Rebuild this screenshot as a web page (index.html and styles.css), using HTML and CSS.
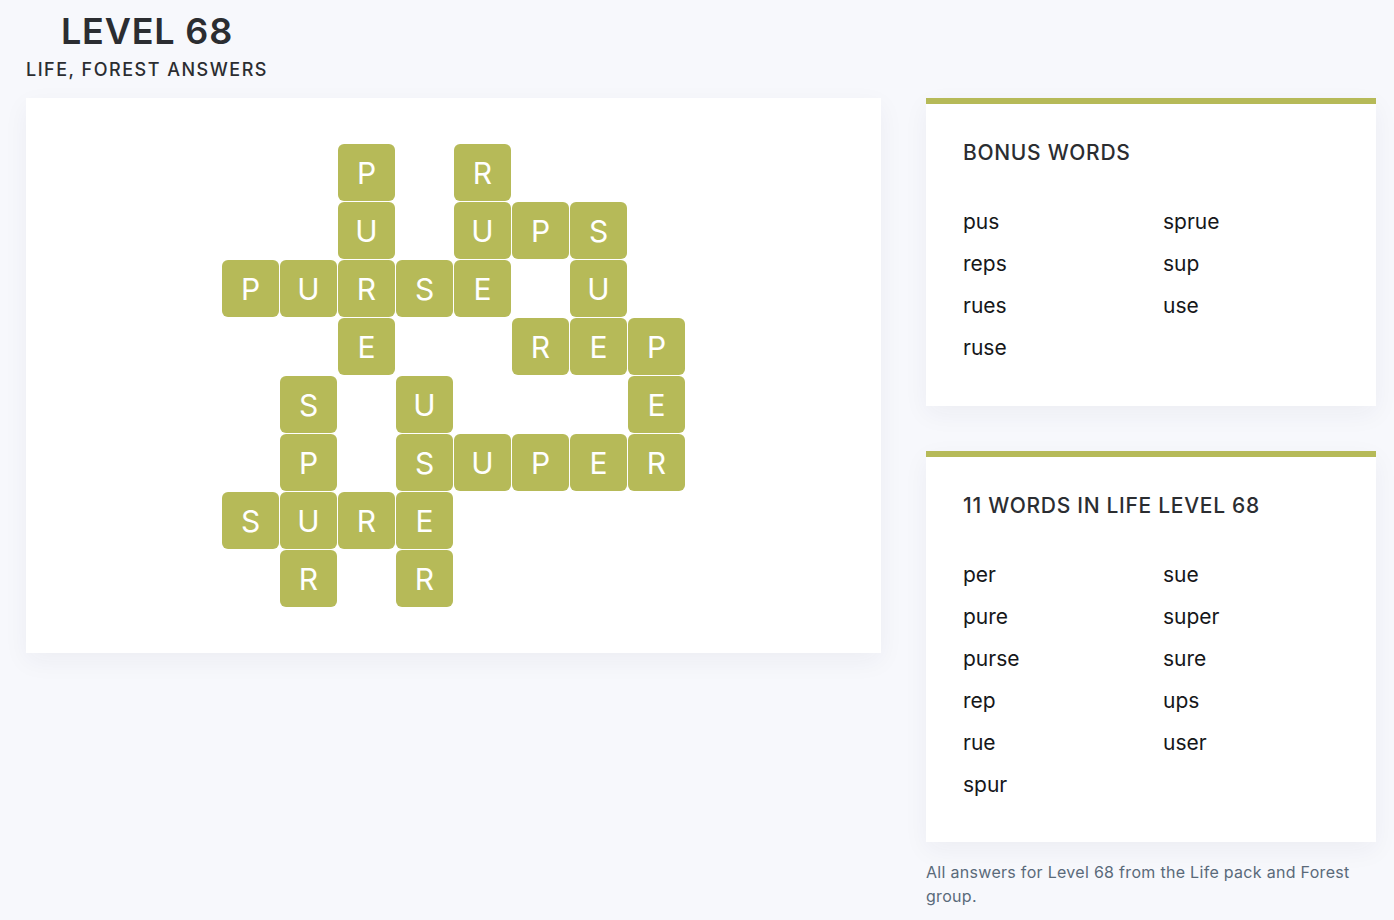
FILE: index.html
```html
<!DOCTYPE html>
<html lang="en">
<head>
<meta charset="utf-8">
<title>Level 68 - Life, Forest Answers</title>
<link rel="stylesheet" href="styles.css">
</head>
<body>
<div class="page">
  <header class="header">
    <h1 class="title">LEVEL 68</h1>
    <p class="subtitle">LIFE, FOREST ANSWERS</p>
  </header>
  <div class="content">
    <section class="board-card">
      <div class="board">
        <div class="cell"></div><div class="cell"></div><div class="tile">P</div><div class="cell"></div><div class="tile">R</div><div class="cell"></div><div class="cell"></div><div class="cell"></div>
        <div class="cell"></div><div class="cell"></div><div class="tile">U</div><div class="cell"></div><div class="tile">U</div><div class="tile">P</div><div class="tile">S</div><div class="cell"></div>
        <div class="tile">P</div><div class="tile">U</div><div class="tile">R</div><div class="tile">S</div><div class="tile">E</div><div class="cell"></div><div class="tile">U</div><div class="cell"></div>
        <div class="cell"></div><div class="cell"></div><div class="tile">E</div><div class="cell"></div><div class="cell"></div><div class="tile">R</div><div class="tile">E</div><div class="tile">P</div>
        <div class="cell"></div><div class="tile">S</div><div class="cell"></div><div class="tile">U</div><div class="cell"></div><div class="cell"></div><div class="cell"></div><div class="tile">E</div>
        <div class="cell"></div><div class="tile">P</div><div class="cell"></div><div class="tile">S</div><div class="tile">U</div><div class="tile">P</div><div class="tile">E</div><div class="tile">R</div>
        <div class="tile">S</div><div class="tile">U</div><div class="tile">R</div><div class="tile">E</div><div class="cell"></div><div class="cell"></div><div class="cell"></div><div class="cell"></div>
        <div class="cell"></div><div class="tile">R</div><div class="cell"></div><div class="tile">R</div><div class="cell"></div><div class="cell"></div><div class="cell"></div><div class="cell"></div>
      </div>
    </section>
    <aside class="sidebar">
      <section class="words-card">
        <h2 class="words-title">BONUS WORDS</h2>
        <ul class="word-list word-list-4">
          <li>pus</li><li>reps</li><li>rues</li><li>ruse</li>
          <li>sprue</li><li>sup</li><li>use</li>
        </ul>
      </section>
      <section class="words-card words-card-main">
        <h2 class="words-title">11 WORDS IN LIFE LEVEL 68</h2>
        <ul class="word-list word-list-6">
          <li>per</li><li>pure</li><li>purse</li><li>rep</li><li>rue</li><li>spur</li>
          <li>sue</li><li>super</li><li>sure</li><li>ups</li><li>user</li>
        </ul>
      </section>
      <p class="note">All answers for Level 68 from the Life pack and Forest group.</p>
    </aside>
  </div>
</div>
</body>
</html>
```

FILE: styles.css
```css
* { box-sizing: border-box; }

html, body {
  margin: 0;
  padding: 0;
}

body {
  background: #f7f8fc;
  font-family: Inter, "Noto Sans", "Liberation Sans", sans-serif;
  color: #2b2d31;
}

.page {
  padding: 9px 18px 0 26px;
}

.header {
  display: inline-flex;
  flex-direction: column;
  align-items: center;
}

.title {
  margin: 0;
  font-size: 36px;
  line-height: 44px;
  font-weight: 600;
  color: #2b2d31;
  letter-spacing: 0.8px;
}

.subtitle {
  margin: 6px 0 0;
  font-size: 18px;
  line-height: 22px;
  font-weight: 500;
  color: #2b2d31;
  letter-spacing: 1.5px;
}

.content {
  display: flex;
  align-items: flex-start;
  gap: 45px;
  margin-top: 17px;
}

.board-card {
  width: 855px;
  height: 555px;
  background: #ffffff;
  box-shadow: 0 8px 24px rgba(30, 40, 80, 0.05);
  display: flex;
  align-items: center;
  justify-content: center;
}

.board {
  display: grid;
  grid-template-columns: repeat(8, 57px);
  grid-auto-rows: 57px;
  gap: 1px;
}

.tile {
  background: #b6ba58;
  border-radius: 6px;
  color: #ffffff;
  font-size: 30px;
  font-weight: 400;
  display: flex;
  align-items: center;
  justify-content: center;
  line-height: 1;
}

.sidebar {
  width: 450px;
  display: flex;
  flex-direction: column;
  gap: 45px;
}

.words-card {
  background: #ffffff;
  border-top: 6px solid #b6ba58;
  box-shadow: 0 8px 24px rgba(30, 40, 80, 0.05);
  padding: 35px 37px 37px;
}

.words-card-main {
  padding-bottom: 36px;
}

.words-title {
  margin: 0 0 34px;
  font-size: 21px;
  line-height: 28px;
  font-weight: 500;
  color: #2b2d31;
  letter-spacing: 0.7px;
}

.word-list {
  list-style: none;
  margin: 0;
  padding: 0;
  display: grid;
  grid-auto-flow: column;
  grid-template-columns: 200px 200px;
  grid-auto-rows: 42px;
  font-size: 21px;
  line-height: 42px;
  color: #16171a;
}

.word-list-4 { grid-template-rows: repeat(4, 42px); }
.word-list-6 { grid-template-rows: repeat(6, 42px); }

.note {
  margin: -27px 0 0;
  font-size: 16px;
  line-height: 24px;
  color: #5a6a7a;
  letter-spacing: 0.3px;
}
```
